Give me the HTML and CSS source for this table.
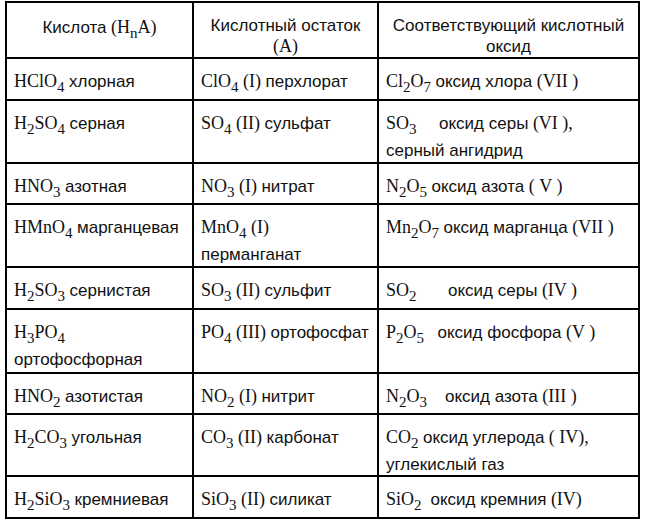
FILE: index.html
```html
<!DOCTYPE html>
<html lang="ru">
<head>
<meta charset="utf-8">
<title>Кислоты и оксиды</title>
<link rel="stylesheet" href="styles.css">
</head>
<body>
<table class="chem">
  <colgroup>
    <col class="c1">
    <col class="c2">
    <col class="c3">
  </colgroup>
  <thead>
    <tr class="r56">
      <th class="first"><span class="ru">Кислота</span> (H<sub>n</sub>A)</th>
      <th><span class="ru">Кислотный остаток</span><br>(A)</th>
      <th><span class="ru">Соответствующий кислотный<br>оксид</span></th>
    </tr>
  </thead>
  <tbody>
    <tr class="r42">
      <td>HClO<sub>4</sub> <span class="ru">хлорная</span></td>
      <td>ClO<sub>4</sub> (I) <span class="ru">перхлорат</span></td>
      <td>Cl<sub>2</sub>O<sub>7</sub> <span class="ru">оксид хлора</span> (VII )</td>
    </tr>
    <tr class="r63">
      <td>H<sub>2</sub>SO<sub>4</sub> <span class="ru">серная</span></td>
      <td>SO<sub>4</sub> (II) <span class="ru">сульфат</span></td>
      <td>SO<sub>3</sub>&nbsp;&nbsp;&nbsp;&nbsp; <span class="ru">оксид серы</span> (VI ),<br><span class="ru">серный ангидрид</span></td>
    </tr>
    <tr class="r41">
      <td>HNO<sub>3</sub> <span class="ru">азотная</span></td>
      <td>NO<sub>3</sub> (I) <span class="ru">нитрат</span></td>
      <td>N<sub>2</sub>O<sub>5</sub> <span class="ru">оксид азота</span> ( V )</td>
    </tr>
    <tr class="r63">
      <td>HMnO<sub>4</sub> <span class="ru">марганцевая</span></td>
      <td>MnO<sub>4</sub> (I)<br><span class="ru">перманганат</span></td>
      <td>Mn<sub>2</sub>O<sub>7</sub> <span class="ru">оксид марганца</span> (VII )</td>
    </tr>
    <tr class="r42">
      <td>H<sub>2</sub>SO<sub>3</sub> <span class="ru">сернистая</span></td>
      <td>SO<sub>3</sub> (II) <span class="ru">сульфит</span></td>
      <td>SO<sub>2</sub>&nbsp;&nbsp;&nbsp;&nbsp;&nbsp;&nbsp; <span class="ru">оксид серы</span> (IV )</td>
    </tr>
    <tr class="r64">
      <td>H<sub>3</sub>PO<sub>4</sub><br><span class="ru">ортофосфорная</span></td>
      <td>PO<sub>4</sub> (III) <span class="ru">ортофосфат</span></td>
      <td>P<sub>2</sub>O<sub>5</sub>&nbsp;&nbsp; <span class="ru">оксид фосфора</span> (V )</td>
    </tr>
    <tr class="r41">
      <td>HNO<sub>2</sub> <span class="ru">азотистая</span></td>
      <td>NO<sub>2</sub> (I) <span class="ru">нитрит</span></td>
      <td>N<sub>2</sub>O<sub>3</sub>&nbsp;&nbsp;&nbsp; <span class="ru">оксид азота</span> (III )</td>
    </tr>
    <tr class="r62">
      <td>H<sub>2</sub>CO<sub>3</sub> <span class="ru">угольная</span></td>
      <td>CO<sub>3</sub> (II) <span class="ru">карбонат</span></td>
      <td>CO<sub>2</sub> <span class="ru">оксид углерода</span> ( IV),<br><span class="ru">углекислый газ</span></td>
    </tr>
    <tr class="r42">
      <td>H<sub>2</sub>SiO<sub>3</sub> <span class="ru">кремниевая</span></td>
      <td>SiO<sub>3</sub> (II) <span class="ru">силикат</span></td>
      <td>SiO<sub>2</sub>&nbsp; <span class="ru">оксид кремния</span> (IV)</td>
    </tr>
  </tbody>
</table>
</body>
</html>
```

FILE: styles.css
```css
html, body {
  background: #ffffff;
}
body {
  margin: 0;
  padding: 1px 0 0 5px;
  font-family: "Liberation Serif", "Times New Roman", serif;
  font-size: 18px;
  color: #111111;
}
.chem {
  border-collapse: collapse;
  table-layout: fixed;
  width: 633px;
}
.c1 { width: 187px; }
.c2 { width: 185px; }
.c3 { width: 261px; }
.chem th,
.chem td {
  border: 2px solid #000000;
  line-height: 21px;
  vertical-align: top;
  padding: 12px 6px 0 7px;
  white-space: nowrap;
  overflow: hidden;
}
.chem th {
  font-weight: normal;
  text-align: center;
  padding-left: 4px;
  padding-right: 4px;
}
.chem th.first {
  padding-top: 14px;
}
.chem sub {
  font-size: 15px;
}
.ru {
  font-family: "Liberation Sans", Roboto, "Noto Sans", sans-serif;
  font-size: 17px;
}
.r56 { height: 56px; }
.r41 { height: 41px; }
.r42 { height: 42px; }
.r62 { height: 62px; }
.r63 { height: 63px; }
.r64 { height: 64px; }
```
